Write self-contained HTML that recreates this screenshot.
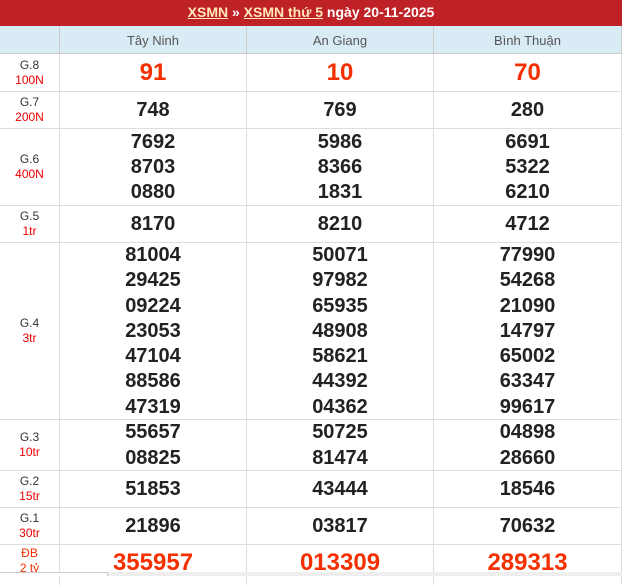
<!DOCTYPE html>
<html><head><meta charset="utf-8"><style>
*{margin:0;padding:0;box-sizing:border-box}
body{width:622px;height:576px;overflow:hidden;background:#fff;font-family:"Liberation Sans",Arial,sans-serif;position:relative}
.top{position:absolute;left:0;top:0;width:622px;height:26px;background:#be2227;color:#fff;font-weight:bold;font-size:14px;text-align:center;line-height:25px}
.top a{color:#ffe7b8;text-decoration:underline}
.hd{position:absolute;top:26px;height:28px;background:#d9ecf6;color:#555;font-size:13px;text-align:center;line-height:29px;border-right:1px solid #ccc;border-bottom:1px solid #ccc}
.r{position:absolute;left:0;width:622px;border-bottom:1px solid #ddd}
.c{position:absolute;top:0;bottom:0;border-right:1px solid #ddd;display:flex;flex-direction:column;justify-content:center;align-items:center;text-align:center}
.l{left:0;width:60px;font-size:12px;color:#333;line-height:15px}
.l span{color:#e00;display:block}
.n{font-size:20px;font-weight:bold;color:#222;line-height:25.3px;padding-top:1px}
.a{left:60px;width:187px}.b{left:247px;width:187px}.d{left:434px;width:188px}
.red{color:#f53000;font-size:24px}
</style></head><body>
<div class="top"><a>XSMN</a> » <a>XSMN thứ 5</a> ngày 20-11-2025</div>
<div class="hd" style="left:0;width:60px"></div>
<div class="hd" style="left:60px;width:187px">Tây Ninh</div>
<div class="hd" style="left:247px;width:187px">An Giang</div>
<div class="hd" style="left:434px;width:188px">Bình Thuận</div>

<div class="r" style="top:54px;height:38px"><div class="c l">G.8<span>100N</span></div><div class="c n a red">91</div><div class="c n b red">10</div><div class="c n d red">70</div></div>
<div class="r" style="top:92px;height:37px"><div class="c l">G.7<span>200N</span></div><div class="c n a">748</div><div class="c n b">769</div><div class="c n d">280</div></div>
<div class="r" style="top:129px;height:77px"><div class="c l">G.6<span>400N</span></div><div class="c n a">7692<br>8703<br>0880</div><div class="c n b">5986<br>8366<br>1831</div><div class="c n d">6691<br>5322<br>6210</div></div>
<div class="r" style="top:206px;height:37px"><div class="c l">G.5<span>1tr</span></div><div class="c n a">8170</div><div class="c n b">8210</div><div class="c n d">4712</div></div>
<div class="r" style="top:243px;height:177px"><div class="c l">G.4<span>3tr</span></div><div class="c n a">81004<br>29425<br>09224<br>23053<br>47104<br>88586<br>47319</div><div class="c n b">50071<br>97982<br>65935<br>48908<br>58621<br>44392<br>04362</div><div class="c n d">77990<br>54268<br>21090<br>14797<br>65002<br>63347<br>99617</div></div>
<div class="r" style="top:420px;height:51px"><div class="c l">G.3<span>10tr</span></div><div class="c n a">55657<br>08825</div><div class="c n b">50725<br>81474</div><div class="c n d">04898<br>28660</div></div>
<div class="r" style="top:471px;height:37px"><div class="c l">G.2<span>15tr</span></div><div class="c n a">51853</div><div class="c n b">43444</div><div class="c n d">18546</div></div>
<div class="r" style="top:508px;height:37px"><div class="c l">G.1<span>30tr</span></div><div class="c n a">21896</div><div class="c n b">03817</div><div class="c n d">70632</div></div>
<div class="r" style="top:545px;height:40px;border:none"><div class="c l" style="color:#f53000;justify-content:flex-start;padding-top:1px">ĐB<span style="color:#f53000">2 tỷ</span></div><div class="c n a red" style="justify-content:flex-start;padding-top:5px">355957</div><div class="c n b red" style="justify-content:flex-start;padding-top:5px">013309</div><div class="c n d red" style="justify-content:flex-start;padding-top:5px">289313</div></div>
<div style="position:absolute;left:0;top:572px;width:108px;height:4px;background:#fff;border-top:1px solid #ccc"></div>
<div style="position:absolute;left:107px;top:572px;width:515px;height:4px;background:#eee;border-left:1px solid #ccc"></div>
</body></html>
